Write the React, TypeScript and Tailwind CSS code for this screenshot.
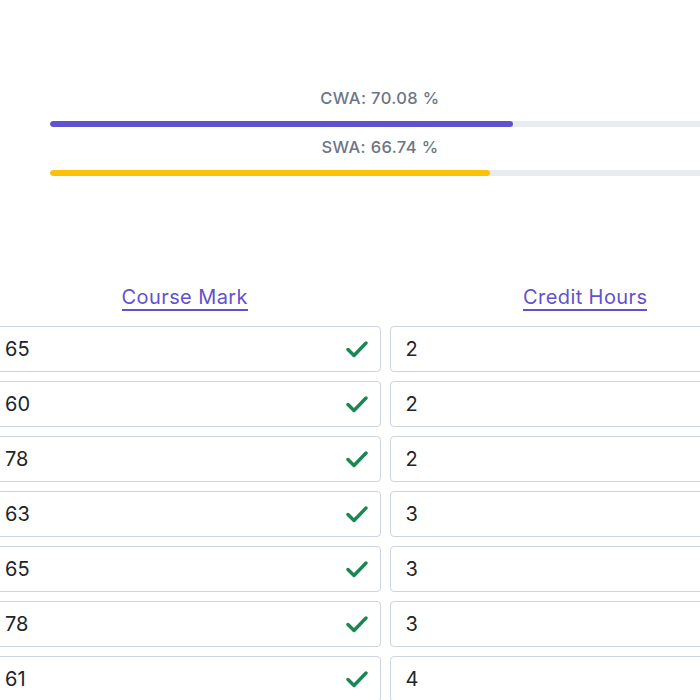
import React from "react";

const marks = [
  { mark: "65", hours: "2" },
  { mark: "60", hours: "2" },
  { mark: "78", hours: "2" },
  { mark: "63", hours: "3" },
  { mark: "65", hours: "3" },
  { mark: "78", hours: "3" },
  { mark: "61", hours: "4" },
];

function Check() {
  return (
    <svg width="22" height="18" viewBox="0 0 22 18" className="shrink-0">
      <path d="M2 9.5 L8 15.5 L20 3" fill="none" stroke="#198754" strokeWidth="3.4" strokeLinecap="round" strokeLinejoin="round" />
    </svg>
  );
}

function Bar({ label, pct, color }: { label: string; pct: number; color: string }) {
  return (
    <div className="flex flex-col items-center">
      <div className="text-[16.5px] leading-[20px] font-medium tracking-[0.4px] text-[#6b7686]">{label}</div>
      <div className="mt-[13px] h-[6px] w-full rounded-full bg-[#e9ecef] overflow-hidden">
        <div className={`h-full rounded-full ${color}`} style={{ width: `${pct}%` }} />
      </div>
    </div>
  );
}

export default function App() {
  return (
    <div className="w-[700px] h-[700px] overflow-hidden bg-white" style={{ fontFamily: "Inter, 'Open Sans', sans-serif" }}>
      <div className="ml-[-11px] w-[792px]">
        <div className="ml-[61px] w-[660px] pt-[88px] flex flex-col gap-[10px]">
          <Bar label="CWA: 70.08 %" pct={70.08} color="bg-[#5f52cf]" />
          <Bar label="SWA: 66.74 %" pct={66.74} color="bg-[#fdc107]" />
        </div>
        <div className="mt-[109px] grid grid-cols-2 gap-x-[9px]">
          <div className="flex justify-center">
            <span className="text-[20px] leading-[24px] text-[#5f52cf] border-b-2 border-[#5f52cf] tracking-[0.4px]">Course Mark</span>
          </div>
          <div className="flex justify-center">
            <span className="text-[20px] leading-[24px] text-[#5f52cf] border-b-2 border-[#5f52cf] tracking-[0.4px]">Credit Hours</span>
          </div>
        </div>
        <div className="mt-[15px] grid grid-cols-2 gap-x-[9px] gap-y-[9px]">
          {marks.map((r, i) => (
            <React.Fragment key={i}>
              <div className="h-[46px] rounded-[4px] border border-[#ccd4df] flex items-center justify-between pl-[15px] pr-[12px]">
                <span className="text-[20px] text-[#212529]">{r.mark}</span>
                <Check />
              </div>
              <div className="h-[46px] rounded-[4px] border border-[#ccd4df] flex items-center pl-[15px]">
                <span className="text-[20px] text-[#212529]">{r.hours}</span>
              </div>
            </React.Fragment>
          ))}
        </div>
      </div>
    </div>
  );
}
